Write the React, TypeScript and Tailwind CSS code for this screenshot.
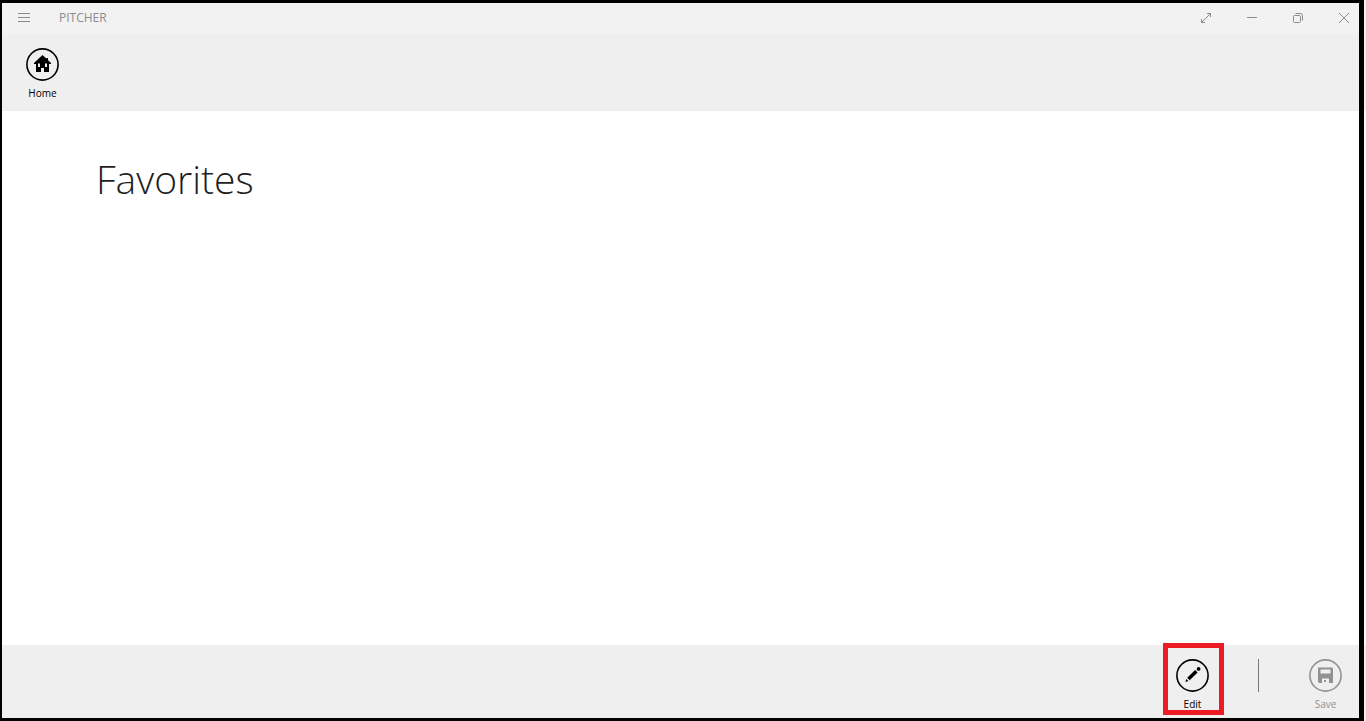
import type { ReactNode } from "react";

interface CommandButtonProps {
  label: string;
  icon: ReactNode;
  disabled?: boolean;
}

function CommandButton({ label, icon, disabled = false }: CommandButtonProps) {
  return (
    <button
      type="button"
      disabled={disabled}
      className="flex w-[65px] flex-col items-center text-black disabled:text-[#929292]"
    >
      <svg width="33" height="33" viewBox="0 0 33 33" aria-hidden="true">
        <circle cx="16.5" cy="16.5" r="15.6" fill="none" stroke="currentColor" strokeWidth="1.6" />
        {icon}
      </svg>
      <span className="mt-1 text-[10px] leading-4">{label}</span>
    </button>
  );
}

const homeIcon = (
  <path
    fill="currentColor"
    fillRule="evenodd"
    d="M16.5 7 L8 15 V16 H10 V24 H15 V20 H18 V24 H23 V16 H25 V15 L22 12.2 V10 H20.5 V10.8 Z M12 15.5 H14 V19 H12 Z M19 15.5 H21 V19 H19 Z"
  />
);

const editIcon = (
  <g fill="currentColor">
    <path d="M19.1 10.9 L21.6 13.4 L13.7 21.3 L11.2 18.8 Z" />
    <circle cx="22.6" cy="9.9" r="1.9" />
    <path d="M10.4 20 L12.4 22 L9.3 23.1 Z" />
  </g>
);

const saveIcon = (
  <path
    fill="currentColor"
    fillRule="evenodd"
    d="M9 8.5 H23 L24 9.5 V24 H20 V19.5 H13 V24 H10 L9 23 Z M11.5 10.5 V14.5 H21.5 V10.5 Z M15 21 H17 V23 H15 Z"
  />
);

function TitleBar() {
  return (
    <header className="flex h-[34px] items-center justify-between bg-[#f2f2f2] pt-px text-[#8c8c8c]">
      <div className="flex items-center">
        <button type="button" aria-label="Menu" className="flex h-7 w-12 items-center justify-center">
          <svg width="12" height="10" viewBox="0 0 12 10" stroke="currentColor" aria-hidden="true">
            <path d="M0 .5 H12 M0 4.5 H12 M0 8.5 H12" />
          </svg>
        </button>
        <span className="ml-[11px] text-xs">PITCHER</span>
      </div>
      <div className="flex">
        <button type="button" aria-label="Full screen" className="flex h-7 w-[46px] items-center justify-center">
          <svg width="10" height="10" viewBox="0 0 10 10" fill="none" stroke="currentColor" aria-hidden="true">
            <path d="M.5 9.5 L9.5 .5 M6 .5 H9.5 V4 M.5 6 V9.5 H4" />
          </svg>
        </button>
        <button type="button" aria-label="Minimize" className="flex h-7 w-[46px] items-center justify-center">
          <svg width="10" height="10" viewBox="0 0 10 10" stroke="currentColor" aria-hidden="true">
            <path d="M0 4.5 H10" />
          </svg>
        </button>
        <button type="button" aria-label="Restore" className="flex h-7 w-[46px] items-center justify-center">
          <svg width="10" height="10" viewBox="0 0 10 10" fill="none" stroke="currentColor" aria-hidden="true">
            <rect x=".5" y="2.5" width="7" height="7" rx="1" />
            <path d="M2.5 .5 H7.5 Q9.5 .5 9.5 2.5 V7.5" />
          </svg>
        </button>
        <button type="button" aria-label="Close" className="flex h-7 w-[45px] items-center justify-center pl-px">
          <svg width="10" height="10" viewBox="0 0 10 10" stroke="currentColor" aria-hidden="true">
            <path d="M0 0 L10 10 M10 0 L0 10" />
          </svg>
        </button>
      </div>
    </header>
  );
}

export default function App() {
  return (
    <div className="relative flex min-h-screen flex-col bg-white font-['Open_Sans','Noto_Sans',sans-serif]">
      <TitleBar />
      <nav className="flex h-[77px] items-start bg-[#efefef] px-[10px] pt-[14px]">
        <CommandButton label="Home" icon={homeIcon} />
      </nav>
      <main className="flex-1 px-24 pt-10">
        <h1 className="text-[39px] leading-[56px] font-light text-[#1f1f1f]">Favorites</h1>
      </main>
      <footer className="flex h-[76px] items-start justify-end bg-[#efefef] pt-[14px] pr-2">
        <div className="relative">
          <CommandButton label="Edit" icon={editIcon} />
          <div className="pointer-events-none absolute -top-4 left-[3px] h-[72px] w-[61px] border-[5px] border-[#ed1c24]" />
        </div>
        <div className="mr-[34px] ml-[33px] h-[33px] w-px bg-[#7a7a7a]" />
        <CommandButton label="Save" icon={saveIcon} disabled />
      </footer>
      <div className="pointer-events-none absolute inset-y-0 right-0.5 left-0 border-t-[3px] border-r-[5px] border-b-[3px] border-l-2 border-black" />
    </div>
  );
}
